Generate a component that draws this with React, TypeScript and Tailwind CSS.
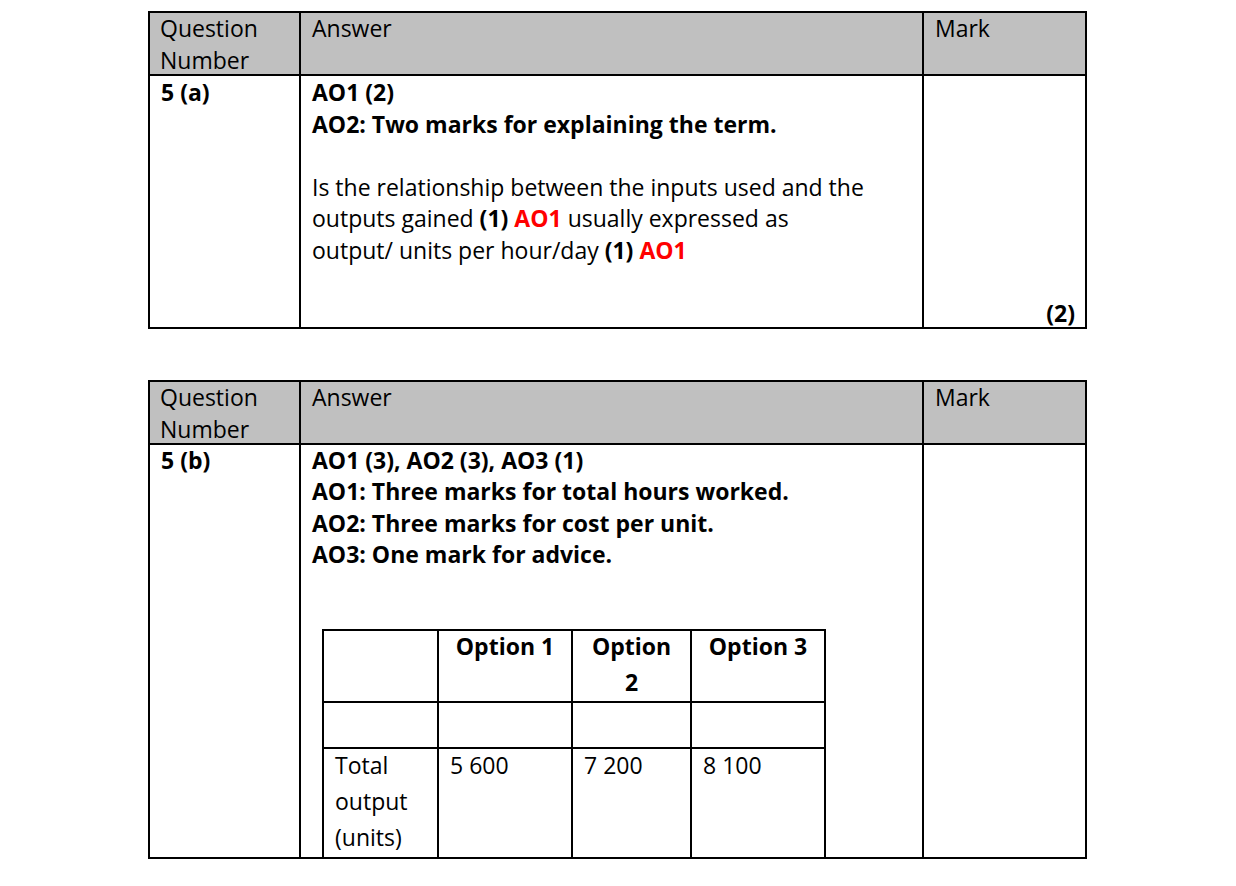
import React from "react";

const font = { fontFamily: '"Open Sans", "Noto Sans", sans-serif' };

function Header() {
  return (
    <div className="flex h-[63px] border-b-2 border-black bg-[#c0c0c0] text-[23px] leading-[31.5px] text-black">
      <div className="w-[151px] shrink-0 border-r-2 border-black pl-[10px]">
        <div>Question</div>
        <div>Number</div>
      </div>
      <div className="w-[623px] shrink-0 border-r-2 border-black pl-[11px]">Answer</div>
      <div className="flex-1 pl-[11px]">Mark</div>
    </div>
  );
}

const Red = ({ children }: { children: React.ReactNode }) => (
  <span className="font-bold text-[#ff0000]">{children}</span>
);

export default function App() {
  return (
    <div className="min-h-[886px] bg-white pt-[11px] text-black" style={font}>
      {/* Table 1 */}
      <div className="ml-[148px] w-[939px] border-2 border-black">
        <Header />
        <div className="flex h-[251px] text-[23px] leading-[31.5px]">
          <div className="w-[151px] shrink-0 border-r-2 border-black pl-[11px] pt-[1px] font-bold">5 (a)</div>
          <div className="w-[623px] shrink-0 border-r-2 border-black pl-[11px] pt-[1px]">
            <div className="whitespace-nowrap font-bold">AO1 (2)</div>
            <div className="whitespace-nowrap font-bold">AO2: Two marks for explaining the term.</div>
            <div className="h-[31.5px]" />
            <div className="whitespace-nowrap">Is the relationship between the inputs used and the</div>
            <div className="whitespace-nowrap">
              outputs gained <span className="font-bold">(1)</span> <Red>AO1</Red> usually expressed as
            </div>
            <div className="whitespace-nowrap">
              output/ units per hour/day <span className="font-bold">(1)</span> <Red>AO1</Red>
            </div>
          </div>
          <div className="flex flex-1 flex-col justify-end pr-[10px] text-right">
            <div className="font-bold leading-[27px]">(2)</div>
          </div>
        </div>
      </div>

      {/* Table 2 */}
      <div className="ml-[148px] mt-[51px] w-[939px] border-2 border-black">
        <Header />
        <div className="flex h-[412px] text-[23px] leading-[31.3px]">
          <div className="w-[151px] shrink-0 border-r-2 border-black pl-[11px] font-bold">5 (b)</div>
          <div className="flex w-[623px] shrink-0 flex-col border-r-2 border-black pl-[11px]">
            <div className="whitespace-nowrap font-bold">AO1 (3), AO2 (3), AO3 (1)</div>
            <div className="whitespace-nowrap font-bold">AO1: Three marks for total hours worked.</div>
            <div className="whitespace-nowrap font-bold">AO2: Three marks for cost per unit.</div>
            <div className="whitespace-nowrap font-bold">AO3: One mark for advice.</div>
            <div className="-ml-[11px] mt-auto pl-[21px]">
              <div className="w-[504px] border-x-2 border-t-2 border-black leading-[36px]">
                <div className="flex h-[72px] border-b-2 border-black font-bold">
                  <div className="w-[115px] shrink-0 border-r-2 border-black" />
                  <div className="w-[134px] shrink-0 border-r-2 border-black text-center">
                    <div className="-mt-[3px] whitespace-nowrap">Option 1</div>
                  </div>
                  <div className="w-[119px] shrink-0 border-r-2 border-black text-center">
                    <div className="-mt-[3px]">Option</div>
                    <div>2</div>
                  </div>
                  <div className="flex-1 text-center">
                    <div className="-mt-[3px] whitespace-nowrap">Option 3</div>
                  </div>
                </div>
                <div className="flex h-[46px] border-b-2 border-black">
                  <div className="w-[115px] shrink-0 border-r-2 border-black" />
                  <div className="w-[134px] shrink-0 border-r-2 border-black" />
                  <div className="w-[119px] shrink-0 border-r-2 border-black" />
                  <div className="flex-1" />
                </div>
                <div className="flex h-[108px]">
                  <div className="w-[115px] shrink-0 border-r-2 border-black pl-[11px]">
                    <div className="-mt-[2px]">Total</div>
                    <div>output</div>
                    <div>(units)</div>
                  </div>
                  <div className="w-[134px] shrink-0 border-r-2 border-black pl-[11px]">
                    <div className="-mt-[2px]">5 600</div>
                  </div>
                  <div className="w-[119px] shrink-0 border-r-2 border-black pl-[11px]">
                    <div className="-mt-[2px]">7 200</div>
                  </div>
                  <div className="flex-1 pl-[11px]">
                    <div className="-mt-[2px]">8 100</div>
                  </div>
                </div>
              </div>
            </div>
          </div>
          <div className="flex-1" />
        </div>
      </div>
    </div>
  );
}
